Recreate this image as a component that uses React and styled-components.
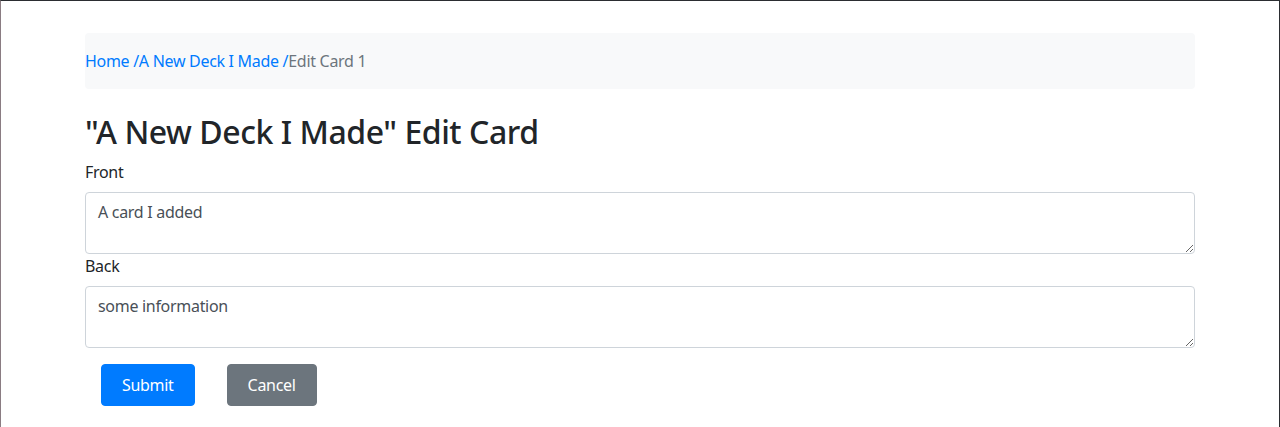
import React from 'react';
import styled, { createGlobalStyle } from 'styled-components';

const GlobalStyle = createGlobalStyle`
  html, body {
    margin: 0;
    padding: 0;
    background: #fff;
  }
  body {
    font-family: "Noto Sans", "Open Sans", Arial, sans-serif;
    font-size: 16px;
    line-height: 1.5;
    letter-spacing: -0.3px;
    color: #212529;
  }
  * { box-sizing: border-box; }
`;

const Frame = styled.div`
  min-height: 100vh;
  border-top: 1px solid #2b2d31;
  border-left: 1px solid #8a7c82;
  border-right: 1px solid #2b2d31;
`;

const Container = styled.div`
  width: 1110px;
  margin: 0 auto;
  padding-top: 32px;
`;

const Breadcrumb = styled.nav`
  display: flex;
  background: #f8f9fa;
  padding: 16px 0;
  margin-bottom: 16px;
  border-radius: 4px;
`;

const Crumb = styled.a`
  color: ${p => (p.$active ? '#6c757d' : '#007bff')};
  text-decoration: none;
  white-space: pre;
`;

const Title = styled.h2`
  font-size: 32px;
  font-weight: 500;
  line-height: 1.2;
  letter-spacing: -0.45px;
  margin: 0 0 9px;
  padding-top: 8px;
`;

const Label = styled.label`
  display: block;
  margin-bottom: 8px;
`;

const TextArea = styled.textarea`
  display: block;
  width: 100%;
  height: 62px;
  padding: 7px 12px 5px;
  font-family: inherit;
  font-size: 16px;
  line-height: 1.5;
  letter-spacing: inherit;
  color: #495057;
  background: #fff;
  border: 1px solid #ced4da;
  border-radius: 4px;
  outline: none;
`;

const Buttons = styled.div`
  display: flex;
`;

const Button = styled.button`
  margin: 16px;
  padding: 8px 20px;
  font-family: inherit;
  font-size: 16px;
  line-height: 1.5;
  letter-spacing: inherit;
  color: #fff;
  background: ${p => (p.$variant === 'secondary' ? '#6c757d' : '#007bff')};
  border: 1px solid ${p => (p.$variant === 'secondary' ? '#6c757d' : '#007bff')};
  border-radius: 4px;
  cursor: pointer;
`;

export default function App() {
  return (
    <Frame>
      <GlobalStyle />
      <Container>
        <Breadcrumb>
          <Crumb href="#">Home /</Crumb>
          <Crumb href="#">A New Deck I Made /</Crumb>
          <Crumb $active>Edit Card 1</Crumb>
        </Breadcrumb>
        <Title>"A New Deck I Made" Edit Card</Title>
        <form onSubmit={e => e.preventDefault()}>
          <Label htmlFor="front">Front</Label>
          <TextArea id="front" defaultValue="A card I added" />
          <Label htmlFor="back">Back</Label>
          <TextArea id="back" defaultValue="some information" />
          <Buttons>
            <Button type="submit">Submit</Button>
            <Button type="button" $variant="secondary">Cancel</Button>
          </Buttons>
        </form>
      </Container>
    </Frame>
  );
}
